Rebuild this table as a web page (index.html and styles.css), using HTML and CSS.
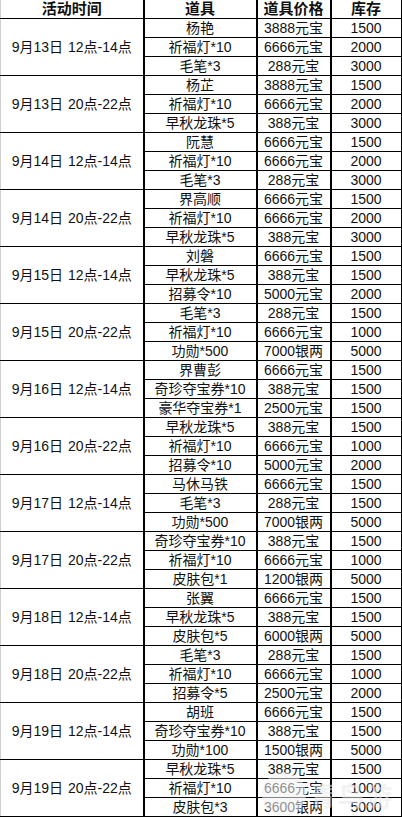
FILE: index.html
```html
<!DOCTYPE html>
<html lang="zh">
<head>
<meta charset="utf-8">
<title>活动时间</title>
<link rel="stylesheet" href="styles.css">
</head>
<body>
<div class="wrap">
<table class="sched">
<colgroup><col class="c1"><col class="c2"><col class="c3"><col class="c4"></colgroup>
<thead>
<tr><th class="time">活动时间</th><th>道具</th><th>道具价格</th><th>库存</th></tr>
</thead>
<tbody>
<tr class="first"><td class="time" rowspan="3">9月13日 12点-14点</td><td>杨艳</td><td>3888元宝</td><td>1500</td></tr>
<tr><td>祈福灯*10</td><td>6666元宝</td><td>2000</td></tr>
<tr><td>毛笔*3</td><td>288元宝</td><td>3000</td></tr>
</tbody>
<tbody>
<tr class="first"><td class="time" rowspan="3">9月13日 20点-22点</td><td>杨芷</td><td>3888元宝</td><td>1500</td></tr>
<tr><td>祈福灯*10</td><td>6666元宝</td><td>2000</td></tr>
<tr><td>早秋龙珠*5</td><td>388元宝</td><td>3000</td></tr>
</tbody>
<tbody>
<tr class="first"><td class="time" rowspan="3">9月14日 12点-14点</td><td>阮慧</td><td>6666元宝</td><td>1500</td></tr>
<tr><td>祈福灯*10</td><td>6666元宝</td><td>2000</td></tr>
<tr><td>毛笔*3</td><td>288元宝</td><td>3000</td></tr>
</tbody>
<tbody>
<tr class="first"><td class="time" rowspan="3">9月14日 20点-22点</td><td>界高顺</td><td>6666元宝</td><td>1500</td></tr>
<tr><td>祈福灯*10</td><td>6666元宝</td><td>2000</td></tr>
<tr><td>早秋龙珠*5</td><td>388元宝</td><td>3000</td></tr>
</tbody>
<tbody>
<tr class="first"><td class="time" rowspan="3">9月15日 12点-14点</td><td>刘磐</td><td>6666元宝</td><td>1500</td></tr>
<tr><td>早秋龙珠*5</td><td>388元宝</td><td>1500</td></tr>
<tr><td>招募令*10</td><td>5000元宝</td><td>2000</td></tr>
</tbody>
<tbody>
<tr class="first"><td class="time" rowspan="3">9月15日 20点-22点</td><td>毛笔*3</td><td>288元宝</td><td>1500</td></tr>
<tr><td>祈福灯*10</td><td>6666元宝</td><td>1000</td></tr>
<tr><td>功勋*500</td><td>7000银两</td><td>5000</td></tr>
</tbody>
<tbody>
<tr class="first"><td class="time" rowspan="3">9月16日 12点-14点</td><td>界曹彭</td><td>6666元宝</td><td>1500</td></tr>
<tr><td>奇珍夺宝券*10</td><td>388元宝</td><td>1500</td></tr>
<tr><td>豪华夺宝券*1</td><td>2500元宝</td><td>1500</td></tr>
</tbody>
<tbody>
<tr class="first"><td class="time" rowspan="3">9月16日 20点-22点</td><td>早秋龙珠*5</td><td>388元宝</td><td>1500</td></tr>
<tr><td>祈福灯*10</td><td>6666元宝</td><td>1000</td></tr>
<tr><td>招募令*10</td><td>5000元宝</td><td>2000</td></tr>
</tbody>
<tbody>
<tr class="first"><td class="time" rowspan="3">9月17日 12点-14点</td><td>马休马铁</td><td>6666元宝</td><td>1500</td></tr>
<tr><td>毛笔*3</td><td>288元宝</td><td>1500</td></tr>
<tr><td>功勋*500</td><td>7000银两</td><td>5000</td></tr>
</tbody>
<tbody>
<tr class="first"><td class="time" rowspan="3">9月17日 20点-22点</td><td>奇珍夺宝券*10</td><td>388元宝</td><td>1500</td></tr>
<tr><td>祈福灯*10</td><td>6666元宝</td><td>1000</td></tr>
<tr><td>皮肤包*1</td><td>1200银两</td><td>5000</td></tr>
</tbody>
<tbody>
<tr class="first"><td class="time" rowspan="3">9月18日 12点-14点</td><td>张翼</td><td>6666元宝</td><td>1500</td></tr>
<tr><td>早秋龙珠*5</td><td>388元宝</td><td>1500</td></tr>
<tr><td>皮肤包*5</td><td>6000银两</td><td>5000</td></tr>
</tbody>
<tbody>
<tr class="first"><td class="time" rowspan="3">9月18日 20点-22点</td><td>毛笔*3</td><td>288元宝</td><td>1500</td></tr>
<tr><td>祈福灯*10</td><td>6666元宝</td><td>1000</td></tr>
<tr><td>招募令*5</td><td>2500元宝</td><td>2000</td></tr>
</tbody>
<tbody>
<tr class="first"><td class="time" rowspan="3">9月19日 12点-14点</td><td>胡班</td><td>6666元宝</td><td>1500</td></tr>
<tr><td>奇珍夺宝券*10</td><td>388元宝</td><td>1500</td></tr>
<tr><td>功勋*100</td><td>1500银两</td><td>5000</td></tr>
</tbody>
<tbody>
<tr class="first"><td class="time" rowspan="3">9月19日 20点-22点</td><td>早秋龙珠*5</td><td>388元宝</td><td>1500</td></tr>
<tr><td>祈福灯*10</td><td>6666元宝</td><td>1000</td></tr>
<tr><td>皮肤包*3</td><td>3600银两</td><td>5000</td></tr>
</tbody>
</table>
<div class="watermark"><span class="wm-circle"></span><span class="wm-text">青鸟游</span></div>
</div>
</body>
</html>
```
FILE: styles.css
```css
html, body {
  margin: 0;
  padding: 0;
  background: #ffffff;
}
.wrap {
  position: relative;
  width: 402px;
  height: 818px;
  overflow: hidden;
}
.sched {
  width: 401px;
  table-layout: fixed;
  border-collapse: collapse;
  font-family: "Liberation Sans", "Noto Sans CJK SC", sans-serif;
  color: #111;
  font-size: 14px;
}
.c1 { width: 143px; }
.c2 { width: 113px; }
.c3 { width: 74px; }
.c4 { width: 71px; }
.sched th,
.sched td {
  height: 18px;
  padding: 0;
  line-height: 18px;
  text-align: center;
  white-space: nowrap;
  border-right: 2px solid #000;
  border-bottom: 1px solid #000;
  overflow: hidden;
}
.sched th {
  font-size: 15px;
  font-weight: bold;
}
.sched th.time,
.sched td.time {
  border-left: 1px solid #cfcfcf;
}
.sched td.time {
  height: auto;
  vertical-align: middle;
  word-spacing: 1px;
}
.watermark {
  position: absolute;
  left: 262px;
  top: 772px;
  display: flex;
  align-items: center;
  gap: 4px;
  opacity: 0.55;
}
.wm-circle {
  width: 44px;
  height: 44px;
  border-radius: 50%;
  background: #f4f4f4;
}
.wm-text {
  font-family: "Noto Sans CJK SC", sans-serif;
  font-size: 26px;
  font-weight: bold;
  color: #e8e8e8;
  letter-spacing: 2px;
}
```
